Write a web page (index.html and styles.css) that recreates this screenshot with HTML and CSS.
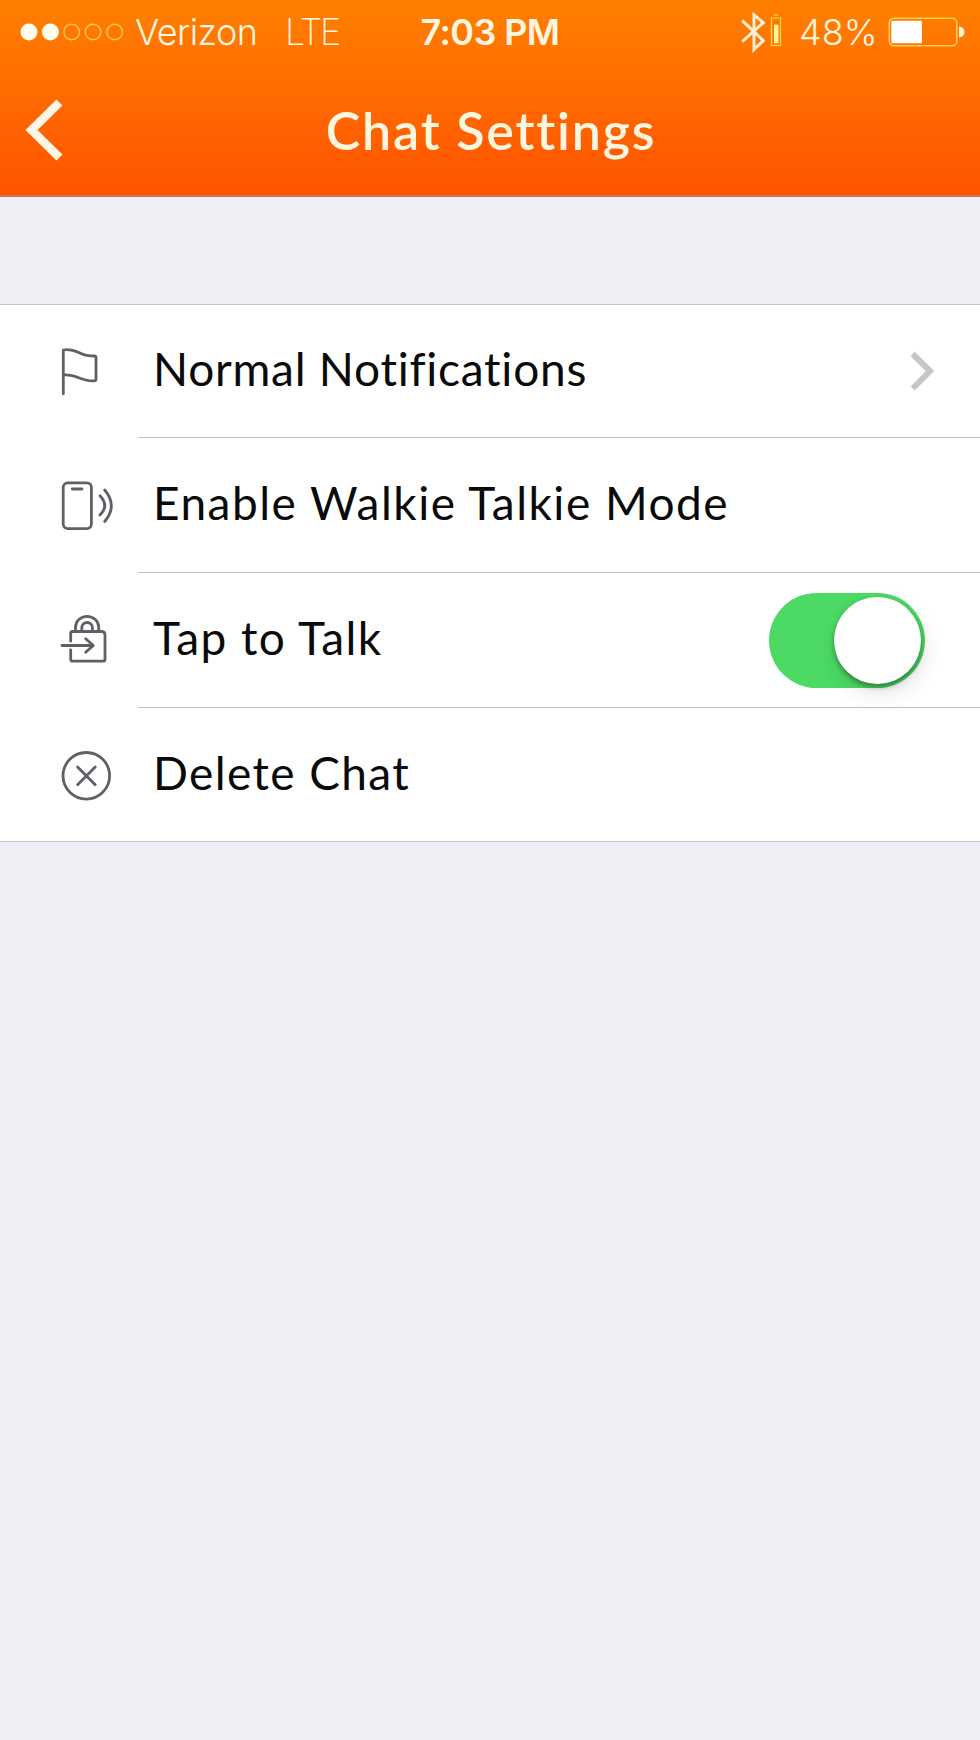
FILE: index.html
```html
<!DOCTYPE html>
<html lang="en">
<head>
<meta charset="utf-8">
<title>Chat Settings</title>
<link rel="stylesheet" href="styles.css">
</head>
<body>
<header class="header">
  <div class="status">
    <div class="status-left">
      <svg class="signal" width="104" height="20" viewBox="0 0 104 20">
        <g fill="#fffbed"><circle cx="9" cy="10" r="8.5"/><circle cx="30.4" cy="10" r="8.5"/></g>
        <g fill="none" stroke="#ffc65c" stroke-width="1.4"><circle cx="51.6" cy="10" r="7.8"/><circle cx="73.1" cy="10" r="7.8"/><circle cx="94.7" cy="10" r="7.8"/></g>
      </svg>
      <span class="carrier">Verizon</span>
      <span class="network">LTE</span>
    </div>
    <span class="time">7:03 PM</span>
    <div class="status-right">
      <svg class="bluetooth" width="44" height="44" viewBox="0 0 44 44">
        <path d="M2.3 10.7 23.3 30.7 14 39.5V4.900l9.300 7.800L2.300 31.700" fill="none" stroke="#fff0d4" stroke-width="3"/>
        <rect x="31.500" y="8" width="9" height="27.500" fill="none" stroke="#ffd23f" stroke-width="1.300"/>
        <path d="M33.800 5h4.500" stroke="#ffd23f" stroke-width="1.500"/>
        <rect x="34" y="14.700" width="4.500" height="18.500" fill="#fff5a0"/>
      </svg>
      <span class="percent">48%</span>
      <svg class="battery" width="78" height="30" viewBox="0 0 78 30">
        <rect x="1.300" y="1.300" width="67.500" height="27.400" rx="4.500" fill="none" stroke="#ffcf52" stroke-width="1.500"/>
        <rect x="3.300" y="3.700" width="30.700" height="22.600" rx="1.500" fill="#fff"/>
        <path d="M71 9.700c3 0 5.500 2 5.500 5.300s-2.500 5.300-5.500 5.300z" fill="#fff0cf"/>
      </svg>
    </div>
  </div>
  <div class="navbar">
    <svg class="back" width="44" height="64" viewBox="0 0 44 64">
      <path d="M39.500 4.500 11.500 32l28 27.500" fill="none" stroke="#fff7e6" stroke-width="8.500"/>
    </svg>
    <h1 class="title">Chat Settings</h1>
  </div>
</header>
<main class="list">
  <div class="row row-first">
    <svg class="icon" viewBox="0 0.500 60 60"><path d="M8.300 52.300V8.500C20 6 26 14.700 36 14.300L39.500 14.500Q41 14.700 41 16V37.500Q41 39.300 39 39.300C27 40.500 22 32.500 9 33.400"/></svg>
    <div class="cell"><span class="label label-notify">Normal Notifications</span>
      <svg class="chevron" width="30" height="44" viewBox="0 0 30 44"><path d="M5.700 5 23 22 5.700 39.500" fill="none" stroke="#c7c7ca" stroke-width="6"/></svg>
    </div>
  </div>
  <div class="row row-walkie">
    <svg class="icon" viewBox="0 1 60 60"><rect x="8.200" y="7.900" width="28.200" height="45.700" rx="4.500"/><path d="M17.300 14H27M45 20.700Q54.500 30.700 45 40M49.700 15Q63 30.700 49.700 46.500"/></svg>
    <div class="cell"><span class="label label-walkie">Enable Walkie Talkie Mode</span></div>
  </div>
  <div class="row row-tap">
    <svg class="icon" viewBox="0 1 60 60"><path d="M20.500 21v-4a11.600 10.700 0 0 1 23.200 0v4M26.800 21v-3.500a5.300 5 0 0 1 10.600 0V21M15.700 31.200V23.500q0-2 2-2H46.500q3.500 0 3.500 3.500V49.200q0 2-2 2H17.700q-2 0-2-2V39.800M7 35.500H38M30.700 28.800l7.600 6.700-7.600 6.700"/></svg>
    <div class="cell"><span class="label label-tap">Tap to Talk</span>
      <span class="toggle"><span class="knob"></span></span>
    </div>
  </div>
  <div class="row row-last">
    <svg class="icon" viewBox="0 0.500 60 60"><circle cx="31.300" cy="31.300" r="23.300"/><path d="m22.600 22.600 17.600 17.600M40.200 22.600 22.600 40.200"/></svg>
    <div class="cell"><span class="label label-delete">Delete Chat</span></div>
  </div>
</main>
</body>
</html>
```
FILE: styles.css
```css
* { box-sizing: border-box; }
body {
  margin: 0;
  min-height: 1740px;
  background: #f0edf5;
  font-family: Lato, "Open Sans", sans-serif;
  font-variant-ligatures: none;
  color: #0a0a0a;
}
svg { display: block; flex: none; }
.header {
  height: 197px;
  background: linear-gradient(#ff8000, #ff6a00 50%, #ff5300);
  border-bottom: 2px solid #cf7450;
  color: #fff6e0;
}
.status {
  display: grid;
  grid-template-columns: 400px 180px 400px;
  align-items: center;
  height: 64px;
  font-family: Inter, "Liberation Sans", sans-serif;
  font-size: 36px;
  line-height: 44px;
  white-space: nowrap;
}
.status-left { display: flex; align-items: center; padding-left: 20px; }
.carrier { margin-left: 11px; width: 150px; font-weight: 350; letter-spacing: -.6px; }
.network { font-weight: 250; letter-spacing: -2.2px; }
.time { text-align: center; font-weight: 600; letter-spacing: -.6px; }
.status-right { display: flex; align-items: center; padding-left: 160px; }
.percent { margin-left: 15px; width: 89px; font-weight: 330; }
.navbar {
  display: grid;
  grid-template-columns: 100px 780px 100px;
  align-items: center;
  height: 132px;
}
.back { margin-left: 20px; }
.title {
  margin: 0;
  padding-left: 2px;
  font-size: 52px;
  line-height: 64px;
  font-weight: 600;
  letter-spacing: 1.8px;
  text-align: center;
}
.list {
  margin-top: 107px;
  background: #fff;
  border-top: 1px solid #c4c3c8;
}
.row { display: flex; align-items: center; height: 135px; }
.row-first { height: 133px; }
.row-last { height: 134px; }
.icon {
  width: 60px;
  height: 60px;
  margin: 0 23px 0 55px;
  fill: none;
  stroke: #5e6166;
  stroke-width: 2.8;
  stroke-linecap: round;
  stroke-linejoin: round;
}
.cell {
  display: flex;
  flex: 1;
  align-items: center;
  justify-content: space-between;
  align-self: stretch;
  padding-left: 15px;
  border-bottom: 1px solid #c0c0c2;
}
.row-last { border-bottom: 1px solid #c4c3c8; }
.row-last .cell { border-bottom: 0; }
.label {
  padding-bottom: 4px;
  font-size: 46px;
  line-height: 60px;
  white-space: nowrap;
}
.label-notify { letter-spacing: .75px; }
.label-walkie { letter-spacing: 1.5px; }
.label-tap { letter-spacing: 1.4px; }
.label-delete { padding-bottom: 3px; letter-spacing: 1.4px; }
.chevron { margin-right: 43px; }
.toggle {
  display: flex;
  align-items: center;
  justify-content: flex-end;
  width: 156px;
  height: 95px;
  margin: 1px 55px 0 0;
  padding-right: 4px;
  border-radius: 48px;
  background: #4cd964;
}
.knob {
  width: 87px;
  height: 87px;
  border-radius: 50%;
  background: #fff;
  box-shadow: 0 3px 5px rgba(0, 0, 0, .35), 3px 9px 20px rgba(0, 0, 0, .12);
}
```
